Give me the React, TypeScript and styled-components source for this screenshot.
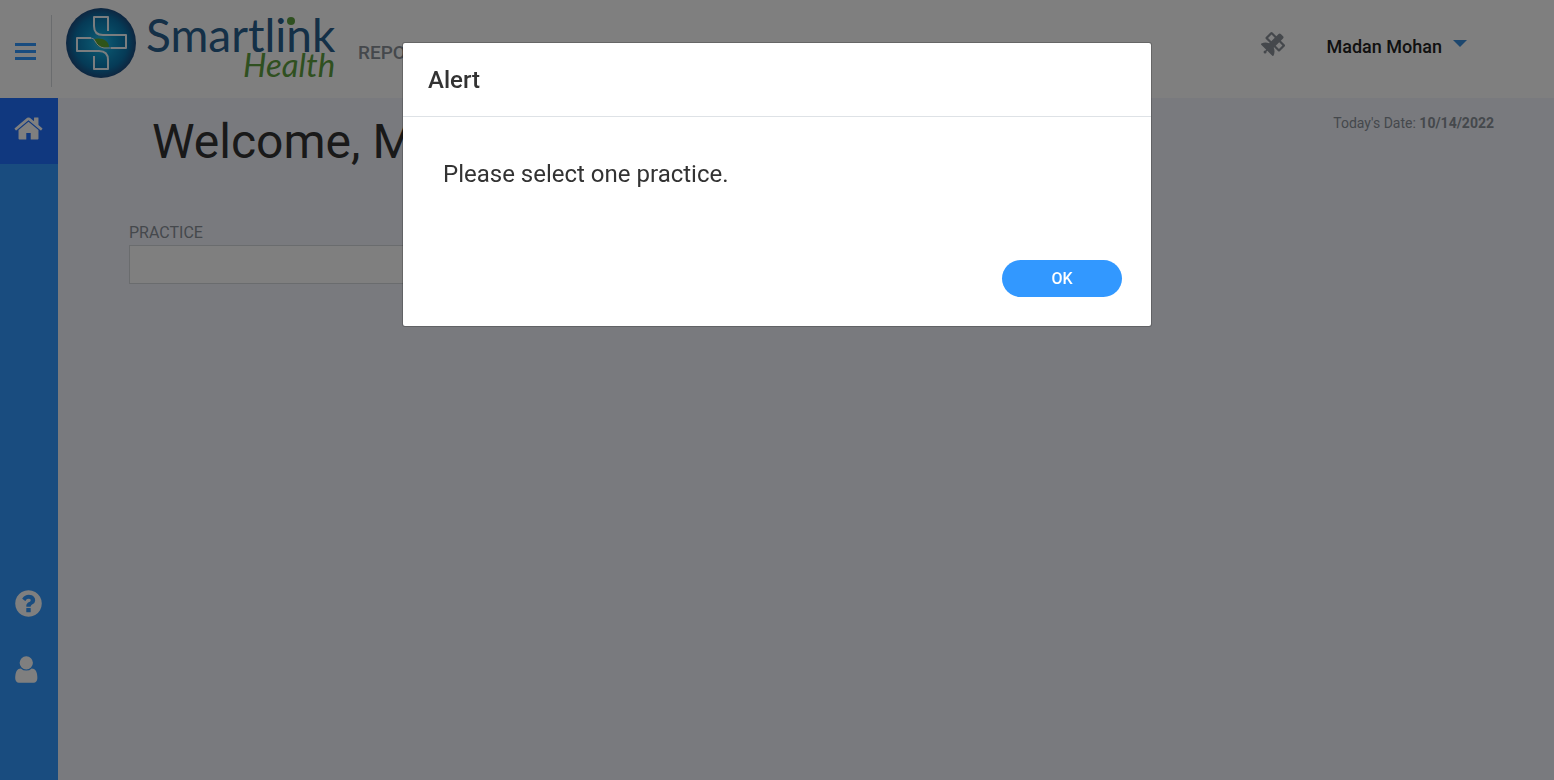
import React from "react";
import styled, { createGlobalStyle } from "styled-components";
import { FaSatellite } from "react-icons/fa";

const GlobalStyle = createGlobalStyle`
  * { box-sizing: border-box; }
  body {
    margin: 0;
    background: #f3f5fd;
    color: #333;
    font-family: Roboto, "Liberation Sans", sans-serif;
    font-size: 16px;
  }
  button, input { font: inherit; }
`;

const Page = styled.div`
  display: flex;
  flex-direction: column;
  min-height: 100vh;
`;

const Header = styled.header`
  display: flex;
  align-items: flex-start;
  height: 98px;
  padding-right: 87px;
  background: #fff;
`;

const MenuButton = styled.button`
  display: flex;
  justify-content: center;
  align-items: center;
  width: 52px;
  height: 72px;
  margin-top: 15px;
  padding: 0;
  border: 0;
  border-right: 1px solid #d5d8dd;
  background: none;
`;

const LogoLink = styled.a`
  display: block;
  margin: 6px 0 0 12px;
  svg { display: block; }
`;

const Nav = styled.nav`
  flex: 1;
  margin: 41px 0 0 18px;
`;

const NavLink = styled.a`
  color: #8a9199;
  font-size: 19px;
  font-weight: 500;
  line-height: 24px;
  text-decoration: none;
`;

const IconButton = styled.button`
  display: flex;
  margin: 32px 42px 0 0;
  padding: 0;
  border: 0;
  background: none;
  color: #8a9199;
`;

const UserMenu = styled.button`
  display: flex;
  gap: 11px;
  margin-top: 35px;
  padding: 0;
  border: 0;
  background: none;
  color: #222;
  font-size: 18px;
  font-weight: 500;
  line-height: 24px;
`;

const Caret = styled.span`
  margin-top: 5px;
  height: 0;
  border: 7px solid transparent;
  border-top-color: #3a8fdc;
  border-bottom: 0;
`;

const Body = styled.div`
  display: flex;
  flex: 1;
`;

const Sidebar = styled.nav`
  display: flex;
  flex-direction: column;
  width: 58px;
  padding-bottom: 78px;
  background: #3298ff;
`;

const SideLink = styled.a<{ $active?: boolean; $bottom?: boolean }>`
  display: flex;
  align-items: center;
  height: 66px;
  padding: ${(p) => (p.$active ? "0 0 6px 13px" : "0 0 0 13px")};
  margin-top: ${(p) => (p.$bottom ? "auto" : "0")};
  background: ${(p) => (p.$active ? "#2070ff" : "transparent")};
  color: #fff;
`;

const Main = styled.main`
  flex: 1;
  padding: 12px 60px 0 71px;
`;

const TitleRow = styled.div`
  display: flex;
  justify-content: space-between;
  align-items: flex-start;
  padding-left: 23px;
`;

const Title = styled.h1`
  margin: 0;
  color: #333;
  font-size: 48px;
  font-weight: 400;
  line-height: 64px;
`;

const Today = styled.p`
  margin: 4px 0 0;
  color: #8a9199;
  font-size: 14px;
  line-height: 18px;
`;

const Field = styled.label`
  display: flex;
  flex-direction: column;
  width: 420px;
  margin-top: 48px;
  color: #8a9199;
  line-height: 22px;
`;

const TextInput = styled.input`
  height: 39px;
  margin-top: 1px;
  padding: 0 12px;
  border: 1px solid #d5d8dd;
  background: #fff;
`;

const Backdrop = styled.div`
  position: fixed;
  inset: 0;
  display: flex;
  justify-content: center;
  align-items: flex-start;
  padding-top: 42px;
  background: rgba(0, 0, 0, 0.5);
`;

const Dialog = styled.section`
  width: 750px;
  max-width: 100%;
  border: 1px solid rgba(0, 0, 0, 0.2);
  border-radius: 3px;
  background: #fff;
  background-clip: padding-box;
`;

const DialogTitle = styled.h2`
  margin: 0;
  padding: 21px 25px 20px;
  border-bottom: 1px solid #dee2e6;
  font-size: 24px;
  font-weight: 500;
  line-height: 32px;
`;

const DialogText = styled.p`
  margin: 0;
  padding: 41px 40px 0;
  font-size: 24px;
  line-height: 32px;
`;

const DialogActions = styled.div`
  display: flex;
  justify-content: flex-end;
  padding: 70px 29px 29px;
`;

const PrimaryButton = styled.button`
  width: 120px;
  height: 37px;
  padding: 0;
  border: 0;
  border-radius: 19px;
  background: #3298ff;
  color: #fff;
  font-size: 16px;
  font-weight: 500;
`;

const glyphs = {
  home: "M1472 992v480q0 26-19 45t-45 19h-384v-384h-256v384h-384q-26 0-45-19t-19-45v-480q0-1 .5-3t.5-3l575-474 575 474q1 2 1 6zm223-69l-62 74q-8 9-21 11h-3q-13 0-21-7l-692-577-692 577q-12 8-24 7-13-2-21-11l-62-74q-8-10-7-23.5t11-21.5l719-599q32-26 76-26t76 26l244 204v-195q0-14 9-23t23-9h192q14 0 23 9t9 23v408l219 182q10 8 11 21.5t-7 23.5z",
  help: "M1024 1376v-192q0-14-9-23t-23-9h-192q-14 0-23 9t-9 23v192q0 14 9 23t23 9h192q14 0 23-9t9-23zm256-672q0-88-55.5-163t-138.5-116-170-41q-243 0-371 213-15 24 8 42l132 100q7 6 19 6 16 0 25-12 53-68 86-92 34-24 86-24 48 0 85.5 26t37.5 59q0 38-20 61t-68 45q-63 28-115.5 86.5t-52.5 125.5v36q0 14 9 23t23 9h192q14 0 23-9t9-23q0-19 21.5-49.5t54.5-49.5q32-18 49-28.5t46-35 44.5-48 28-60.5 12.5-81zm384 192q0 209-103 385.5t-279.5 279.5-385.5 103-385.5-103-279.5-279.5-103-385.5 103-385.5 279.5-279.5 385.5-103 385.5 103 279.5 279.5 103 385.5z",
  user: "M1408 1399q0 109-62.5 187t-150.5 78h-854q-88 0-150.5-78t-62.5-187q0-85 8.5-160.5t31.5-152 58.5-131 94-89 134.5-34.5q131 128 313 128t313-128q76 0 134.5 34.5t94 89 58.5 131 31.5 152 8.5 160.5zm-256-887q0 159-112.5 271.5t-271.5 112.5-271.5-112.5-112.5-271.5 112.5-271.5 271.5-112.5 271.5 112.5 112.5 271.5z",
};

const Glyph = ({ name }: { name: keyof typeof glyphs }) => (
  <svg width="31" height="31" viewBox="0 0 1792 1792" fill="currentColor" aria-hidden="true">
    <path d={glyphs[name]} />
  </svg>
);

const Logo = () => (
  <svg width="276" height="80" viewBox="0 0 276 80" role="img" aria-label="Smartlink Health">
    <defs>
      <radialGradient id="disc">
        <stop offset="0" stopColor="#2fc0ea" />
        <stop offset="0.35" stopColor="#119bcf" />
        <stop offset="0.75" stopColor="#0b76ae" />
        <stop offset="1" stopColor="#1c4c80" />
      </radialGradient>
    </defs>
    <circle cx="37" cy="37" r="35" fill="url(#disc)" />
    <path d="M30 33C37 31 45 34 45 41C38 43 32 41 30 33Z" fill="#5fa832" />
    <g fill="none" stroke="#f4fbff" strokeWidth="2" strokeLinejoin="round">
      <path d="M44 25V11H30V20Q30 29 39 29H62V42H47" />
      <path d="M30 50V63H44V54Q44 45 35 45H13V32H27" />
      <path d="M27 32Q30 32 31 35Q34 41 40 42H47" strokeWidth="1" />
    </g>
    <text x="82" y="46" fill="#28608f" fontFamily="Lato, sans-serif" fontSize="46">Smartlink</text>
    <circle cx="227" cy="15" r="4" fill="#5fa040" />
    <text x="179" y="71" fill="#5fa040" fontFamily="Lato, sans-serif" fontStyle="italic" fontSize="33">Health</text>
  </svg>
);

export default function App() {
  return (
    <>
      <GlobalStyle />
      <Page>
        <Header>
          <MenuButton aria-label="Toggle menu">
            <svg width="21" height="17" viewBox="0 0 21 17" fill="#3298ff">
              <rect width="21" height="3" />
              <rect y="7" width="21" height="3" />
              <rect y="14" width="21" height="3" />
            </svg>
          </MenuButton>
          <LogoLink href="#"><Logo /></LogoLink>
          <Nav><NavLink href="#">REPORTS</NavLink></Nav>
          <IconButton aria-label="Satellite"><FaSatellite size={24} /></IconButton>
          <UserMenu>Madan Mohan<Caret /></UserMenu>
        </Header>
        <Body>
          <Sidebar>
            <SideLink href="#" $active aria-label="Home"><Glyph name="home" /></SideLink>
            <SideLink href="#" $bottom aria-label="Help"><Glyph name="help" /></SideLink>
            <SideLink href="#" aria-label="Profile"><Glyph name="user" /></SideLink>
          </Sidebar>
          <Main>
            <TitleRow>
              <Title>Welcome, Madan</Title>
              <Today>Today's Date: <b>10/14/2022</b></Today>
            </TitleRow>
            <Field>
              PRACTICE
              <TextInput type="text" />
            </Field>
          </Main>
        </Body>
      </Page>
      <Backdrop>
        <Dialog role="dialog" aria-modal="true" aria-labelledby="alert-title">
          <DialogTitle id="alert-title">Alert</DialogTitle>
          <DialogText>Please select one practice.</DialogText>
          <DialogActions><PrimaryButton>OK</PrimaryButton></DialogActions>
        </Dialog>
      </Backdrop>
    </>
  );
}
